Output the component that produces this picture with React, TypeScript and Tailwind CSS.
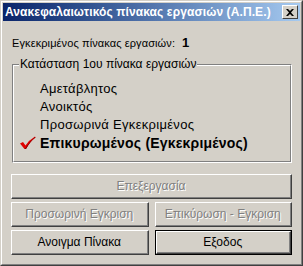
import React from "react";

const face = "bg-[#D4D0C8]";

const CheckMark = () => (
  <svg width="17" height="14" viewBox="0 0 17 14" className="shrink-0">
    <path d="M1 7.5 L4 6 L6.5 9.5 Q10 4 16 0.5 L16.5 1.5 Q11 5.5 7 13 L5.5 13 Z" fill="#E00000" />
    <path d="M5.5 13 L7 13 Q11 5.5 16.5 1.5 L16 1 Q10.5 5.5 6.5 12 Z" fill="#800000" />
  </svg>
);

type BtnProps = {
  label: string;
  disabled?: boolean;
  isDefault?: boolean;
};

const ClassicButton = ({ label, disabled, isDefault }: BtnProps) => (
  <div className={isDefault ? "border border-black h-[25px]" : "h-[25px]"}>
    <div className="h-full border-t border-l border-t-white border-l-white border-r border-b border-r-[#404040] border-b-[#404040]">
      <div
        className={
          "h-full flex items-center justify-center border-r border-b border-r-[#808080] border-b-[#808080] text-[12px] " +
          (disabled ? "text-[#808080] [text-shadow:1px_1px_0_#ffffff]" : "text-black")
        }
      >
        {label}
      </div>
    </div>
  </div>
);

const states = [
  { label: "Αμετάβλητος", checked: false },
  { label: "Ανοικτός", checked: false },
  { label: "Προσωρινά Εγκεκριμένος", checked: false },
  { label: "Επικυρωμένος (Εγκεκριμένος)", checked: true },
];

export default function App() {
  return (
    <div
      className={`w-[303px] h-[266px] ${face} border border-t-[#D4D0C8] border-l-[#D4D0C8] border-r-[#404040] border-b-[#404040] font-['Liberation_Sans',Arial,sans-serif] select-none`}
    >
      <div className="h-full border border-t-white border-l-white border-r-[#808080] border-b-[#808080] p-px flex flex-col">
        {/* title bar */}
        <div className="h-[18px] flex items-center justify-between bg-gradient-to-r from-[#0A246A] to-[#A6CAF0] pl-[2px] pr-[2px]">
          <span className="text-white font-bold text-[12px] leading-none tracking-[0.1px]">
            Ανακεφαλαιωτικός πίνακας εργασιών (Α.Π.Ε.)
          </span>
          <div className="w-[16px] h-[14px] bg-[#D4D0C8] border-t border-l border-t-white border-l-white border-r border-b border-r-[#404040] border-b-[#404040] flex items-center justify-center">
            <svg width="8" height="7" viewBox="0 0 8 7">
              <path d="M0 0 H2 L4 2 L6 0 H8 L5 3.5 L8 7 H6 L4 5 L2 7 H0 L3 3.5 Z" fill="black" />
            </svg>
          </div>
        </div>

        {/* body */}
        <div className="flex-1 flex flex-col px-[8px]">
          <div className="mt-[15px] ml-[1px] flex items-center gap-[7px] text-[11px] text-black h-[14px]">
            <span className="tracking-[0.1px]">Εγκεκριμένος πίνακας εργασιών:</span>
            <span className="font-bold text-[13px]">1</span>
          </div>

          {/* group box */}
          <div className="relative mt-[14px] ml-[1px] w-[280px] h-[99px] border border-t-[#808080] border-l-[#808080] border-r-white border-b-white">
            <div className="h-full border border-t-white border-l-white border-r-[#808080] border-b-[#808080] flex flex-col pl-[5px] pt-[13px]">
              {states.map((s, i) => (
                <div key={i} className={`flex items-center gap-[4px] ${i === 0 ? "h-[19px]" : "h-[18px]"}`}>
                  <div className="w-[17px] shrink-0 flex items-center">{s.checked && <CheckMark />}</div>
                  <span className={s.checked ? "font-bold text-[14px] tracking-[0.2px]" : "text-[13px] tracking-[0.3px]"}>
                    {s.label}
                  </span>
                </div>
              ))}
            </div>
            <span className={`absolute left-[6px] -top-[8px] ${face} px-[1px] text-[12px] leading-[14px]`}>
              Κατάσταση 1ου πίνακα εργασιών
            </span>
          </div>

          {/* buttons */}
          <div className="mt-[11px] w-[281px] flex flex-col gap-[3px]">
            <ClassicButton label="Επεξεργασία" disabled />
            <div className="grid grid-cols-2 gap-[6px]">
              <ClassicButton label="Προσωρινή Εγκριση" disabled />
              <ClassicButton label="Επικύρωση - Εγκριση" disabled />
            </div>
            <div className="grid grid-cols-2 gap-[6px]">
              <ClassicButton label="Ανοιγμα Πίνακα" />
              <ClassicButton label="Εξοδος" isDefault />
            </div>
          </div>
        </div>
      </div>
    </div>
  );
}
